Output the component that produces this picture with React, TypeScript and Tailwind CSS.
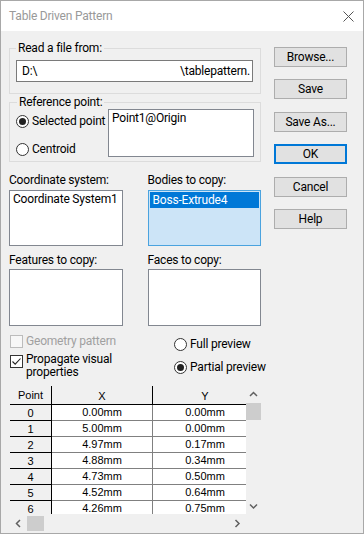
import React from "react";

const rows = [
  ["0", "0.00mm", "0.00mm"],
  ["1", "5.00mm", "0.00mm"],
  ["2", "4.97mm", "0.17mm"],
  ["3", "4.88mm", "0.34mm"],
  ["4", "4.73mm", "0.50mm"],
  ["5", "4.52mm", "0.64mm"],
  ["6", "4.26mm", "0.75mm"],
];

function Radio({ checked }: { checked?: boolean }) {
  return (
    <span className="w-[13px] h-[13px] rounded-full border border-[#333333] bg-white flex items-center justify-center shrink-0">
      {checked && <span className="w-[7px] h-[7px] rounded-full bg-[#222222]" />}
    </span>
  );
}

function Button({ label, primary }: { label: string; primary?: boolean }) {
  return (
    <div
      className={
        "w-[73px] h-[20px] bg-[#e1e1e1] flex items-center justify-center " +
        (primary ? "border-2 border-[#0078d7]" : "border border-[#adadad]")
      }
    >
      {label}
    </div>
  );
}

function Chevron({ dir }: { dir: "up" | "down" | "left" | "right" }) {
  const d =
    dir === "up"
      ? "M1 5 L4.5 1.5 L8 5"
      : dir === "down"
      ? "M1 1.5 L4.5 5 L8 1.5"
      : dir === "left"
      ? "M5 1 L1.5 4.5 L5 8"
      : "M1.5 1 L5 4.5 L1.5 8";
  const w = dir === "up" || dir === "down" ? 9 : 7;
  const h = dir === "up" || dir === "down" ? 7 : 9;
  return (
    <svg width={w} height={h} viewBox={`0 0 ${w} ${h}`}>
      <path d={d} fill="none" stroke="#606060" strokeWidth="1.5" />
    </svg>
  );
}

export default function App() {
  return (
    <div className="w-[364px] h-[534px] border border-[#a8a8a8] bg-[#f0f0f0] flex flex-col text-[12px] text-black whitespace-nowrap tracking-[-0.2px] font-['Roboto','Noto_Sans',sans-serif]">
      <div className="h-[30px] shrink-0 bg-white flex items-center justify-between pl-[8px] pr-[9px]">
        <span className="text-[#999999]">Table Driven Pattern</span>
        <svg width="11" height="11" viewBox="0 0 11 11">
          <path d="M0.5 0.5 L10.5 10.5 M10.5 0.5 L0.5 10.5" stroke="#555555" strokeWidth="1" />
        </svg>
      </div>

      <div className="flex pl-[8px] pt-[9px]">
        {/* left column */}
        <div className="w-[252px] flex flex-col">
          <fieldset className="border border-[#dcdcdc] pl-[6px] pr-[7px] pb-[11px]">
            <legend className="px-[2px] leading-[16px]">Read a file from:</legend>
            <div className="mt-[4px] h-[22px] border border-[#7a7a7a] bg-white flex items-center justify-between pl-[5px] pr-[2px] leading-[16px]">
              <span>D:\</span>
              <span>\tablepattern.</span>
            </div>
          </fieldset>

          <fieldset className="border border-[#dcdcdc] pl-[6px] pr-[6px] pb-[3px]">
            <legend className="px-[2px] ml-[1px] leading-[16px]">Reference point:</legend>
            <div className="flex -mt-[1px]">
              <div className="flex-1 flex flex-col">
                <div className="mt-[3px] h-[18px] flex items-center gap-[3px]">
                  <Radio checked />
                  <span>Selected point</span>
                </div>
                <div className="mt-[10px] h-[18px] flex items-center gap-[3px]">
                  <Radio />
                  <span>Centroid</span>
                </div>
              </div>
              <div className="w-[146px] shrink-0 h-[48px] border border-[#828790] bg-white px-[3px] leading-[16px]">
                Point1@Origin
              </div>
            </div>
          </fieldset>

          <div className="mt-[10px] grid grid-cols-2 gap-x-[25px] leading-[16px]">
            <div className="flex flex-col">
              <span>Coordinate system:</span>
              <div className="mt-[2px] h-[56px] border border-[#828790] bg-white px-[3px] overflow-hidden">Coordinate System1</div>
            </div>
            <div className="flex flex-col">
              <span>Bodies to copy:</span>
              <div className="mt-[2px] h-[56px] border border-[#4aa3df] bg-[#cce4f7] p-[1px]">
                <div className="h-[16px] bg-[#0078d7] text-white px-[3px]">Boss-Extrude4</div>
              </div>
            </div>
            <div className="flex flex-col mt-[6px]">
              <span>Features to copy:</span>
              <div className="mt-[1px] h-[57px] border border-[#828790] bg-white" />
            </div>
            <div className="flex flex-col mt-[6px]">
              <span>Faces to copy:</span>
              <div className="mt-[1px] h-[57px] border border-[#828790] bg-white" />
            </div>
          </div>

          <div className="flex">
            <div className="w-[165px] shrink-0 pl-[1px] flex flex-col">
              <div className="mt-[7px] h-[16px] flex items-center gap-[3px] text-[#a0a0a0]">
                <span className="w-[13px] h-[13px] border border-[#bcbcbc] bg-[#f7f7f7] shrink-0" />
                <span>Geometry pattern</span>
              </div>
              <div className="mt-[4px] flex items-start gap-[3px]">
                <span className="mt-[2px] w-[13px] h-[13px] border border-[#333333] bg-white shrink-0 flex items-center justify-center">
                  <svg width="11" height="11" viewBox="0 0 11 11">
                    <path d="M1.5 5.5 L4.2 8.2 L9.5 2.5" fill="none" stroke="#222222" strokeWidth="1.1" />
                  </svg>
                </span>
                <span className="leading-[13px]">
                  Propagate visual
                  <br />
                  properties
                </span>
              </div>
            </div>
            <div className="flex flex-col">
              <div className="mt-[10px] h-[16px] flex items-center gap-[3px]">
                <Radio />
                <span>Full preview</span>
              </div>
              <div className="mt-[7px] h-[16px] flex items-center gap-[3px]">
                <Radio checked />
                <span>Partial preview</span>
              </div>
            </div>
          </div>

          {/* table */}
          <div className="mt-[7px] ml-[1px] w-[251px] flex flex-col text-[11px] tracking-normal font-['Liberation_Sans',Arial,sans-serif]">
            <div className="flex h-[128px]">
              <div className="w-[236px] overflow-hidden bg-white">
                <div className="flex h-[19px] bg-[#f0f0f0] border-b border-black">
                  <div className="w-[42px] shrink-0 border-r border-black flex items-center justify-center pt-[1px]">Point</div>
                  <div className="w-[101px] shrink-0 border-r border-black flex items-center justify-center pt-[3px]">X</div>
                  <div className="w-[104px] shrink-0 flex items-center justify-center pt-[3px]">Y</div>
                </div>
                {rows.map((r) => (
                  <div key={r[0]} className="flex h-[16px]">
                    <div className="w-[42px] shrink-0 bg-[#f0f0f0] border-r border-b border-black flex items-center justify-center pt-[1px]">{r[0]}</div>
                    <div className="w-[101px] shrink-0 border-r border-b border-[#808080] flex items-center justify-center">{r[1]}</div>
                    <div className="w-[104px] shrink-0 border-b border-[#808080] flex items-center justify-center">{r[2]}</div>
                  </div>
                ))}
              </div>
              <div className="w-[15px] bg-[#f0f0f0] flex flex-col">
                <div className="h-[17px] flex items-center justify-center">
                  <Chevron dir="up" />
                </div>
                <div className="h-[17px] bg-[#cdcdcd]" />
                <div className="flex-1" />
                <div className="h-[17px] flex items-center justify-center pt-[2px]">
                  <Chevron dir="down" />
                </div>
              </div>
            </div>
            <div className="mt-[2px] h-[15px] flex">
              <div className="w-[17px] flex items-center justify-center">
                <Chevron dir="left" />
              </div>
              <div className="w-[17px] bg-[#cdcdcd]" />
              <div className="flex-1" />
              <div className="w-[17px] flex items-center justify-center">
                <Chevron dir="right" />
              </div>
              <div className="w-[15px]" />
            </div>
          </div>
        </div>

        {/* right column */}
        <div className="ml-[13px] pt-[7px] flex flex-col">
          <Button label="Browse..." />
          <div className="mt-[12px]"><Button label="Save" /></div>
          <div className="mt-[13px]"><Button label="Save As..." /></div>
          <div className="mt-[12px]"><Button label="OK" primary /></div>
          <div className="mt-[13px]"><Button label="Cancel" /></div>
          <div className="mt-[12px]"><Button label="Help" /></div>
        </div>
      </div>
    </div>
  );
}
